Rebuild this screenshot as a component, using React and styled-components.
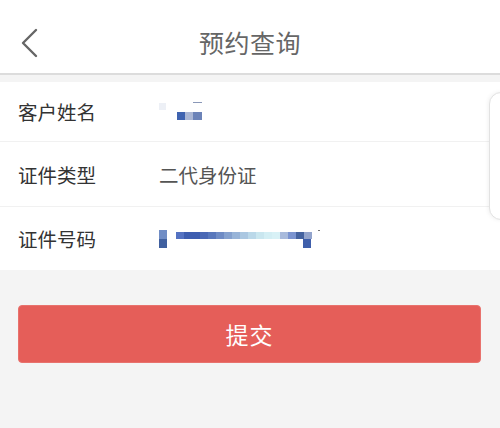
import React from "react";
import styled, { createGlobalStyle } from "styled-components";

const Global = createGlobalStyle`
  html, body { margin: 0; padding: 0; background: #f4f4f4; }
  body { font-family: "Noto Sans CJK SC", "Noto Sans", sans-serif; }
  * { box-sizing: border-box; }
`;

const Page = styled.div`
  position: relative;
  width: 500px;
  height: 428px;
  background: #f4f4f4;
  overflow: hidden;
`;

const Header = styled.header`
  height: 75px;
  background: #fff;
  border-bottom: 2px solid #dcdcdc;
  display: flex;
  align-items: center;
  justify-content: center;
  position: relative;
`;

const Back = styled.button`
  position: absolute;
  left: 15px;
  top: 22px;
  width: 30px;
  height: 42px;
  padding: 0;
  border: 0;
  background: none;
  display: flex;
  align-items: center;
  justify-content: center;
`;

const Title = styled.h1`
  margin: 0;
  font-size: 25px;
  line-height: 30px;
  font-weight: 400;
  color: #666;
  letter-spacing: 0.5px;
  margin-top: 11px;
`;

const Form = styled.section`
  margin-top: 7px;
  background: #fff;
`;

const Row = styled.div`
  height: ${(p) => p.$h}px;
  display: flex;
  align-items: center;
  padding-left: 18px;
  border-bottom: ${(p) => (p.$last ? "none" : "1px solid #f1f1f1")};
`;

const Label = styled.span`
  width: 141px;
  font-size: 19.5px;
  color: #333;
`;

const Value = styled.span`
  font-size: 19.5px;
  color: #555;
`;

const Mosaic = styled.div`
  position: relative;
  width: ${(p) => p.$w}px;
  height: ${(p) => p.$hgt}px;
`;

const Cell = styled.i`
  position: absolute;
  display: block;
`;

const Submit = styled.button`
  display: block;
  margin: 35px 19px 0 18px;
  width: 463px;
  height: 58px;
  border: 1px solid #e8726d;
  border-radius: 4px;
  background: #e55e59;
  color: #fff;
  font-family: inherit;
  font-size: 23px;
  letter-spacing: 1px;
`;

const SideCard = styled.div`
  position: absolute;
  left: 489px;
  top: 92px;
  width: 40px;
  height: 128px;
  border-radius: 12px;
  background: #fff;
  border: 1px solid #e2e2e2;
  box-shadow: -1px 0 4px rgba(0, 0, 0, 0.06);
`;

const nameCells = [
  [0, 0, 7, 7, "#edf0f6"],
  [34, -1, 9, 1, "#8a98b8"],
  [18, 9, 8, 8, "#3f63b0"],
  [26, 9, 8, 8, "#aab6d4"],
  [34, 9, 9, 8, "#6c83b8"],
];

const barColors = [
  "#5472c2", "#3d5db0", "#3d5db0", "#4a68b5", "#5877bc", "#6e8bc5",
  "#85a1cf", "#98b4d8", "#aac7e1", "#bad8e9", "#c9e6ef", "#d3eef4",
  "#d8f1f6", "#a8badc", "#7a93d0", "#44629f", "#93a4cc",
];

const idCells = [
  [0, 0, 8, 9, "#708dc5"],
  [0, 9, 8, 9, "#40609f"],
  ...barColors.map((c, i) => [17 + i * 8, 2, 8, 7, c]),
  [144, 9, 8, 9, "#3f5fab"],
  [159, 0, 2, 1, "#777"],
];

function Pixels({ cells, w, h }) {
  return (
    <Mosaic $w={w} $hgt={h}>
      {cells.map(([x, y, cw, ch, c], i) => (
        <Cell key={i} style={{ left: x, top: y, width: cw, height: ch, background: c }} />
      ))}
    </Mosaic>
  );
}

export default function App() {
  return (
    <Page>
      <Global />
      <Header>
        <Back aria-label="返回">
          <svg width="18" height="30" viewBox="0 0 18 30">
            <polyline points="15,2 2,15 15,28" fill="none" stroke="#666" strokeWidth="2.4" strokeLinecap="round" strokeLinejoin="round" />
          </svg>
        </Back>
        <Title>预约查询</Title>
      </Header>
      <Form>
        <Row $h={60}>
          <Label>客户姓名</Label>
          <Pixels cells={nameCells} w={45} h={17} />
        </Row>
        <Row $h={65}>
          <Label>证件类型</Label>
          <Value>二代身份证</Value>
        </Row>
        <Row $h={63} $last>
          <Label>证件号码</Label>
          <Pixels cells={idCells} w={162} h={18} />
        </Row>
      </Form>
      <Submit>提交</Submit>
      <SideCard />
    </Page>
  );
}
